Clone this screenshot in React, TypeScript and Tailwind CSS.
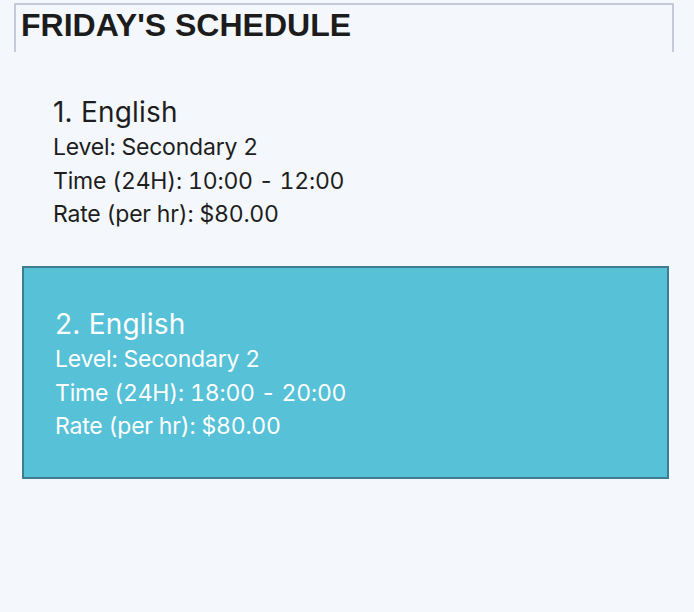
import React from "react";

type Lesson = { n: number; subject: string; level: string; time: string; rate: string };

const lessons: Lesson[] = [
  { n: 1, subject: "English", level: "Secondary 2", time: "10:00 - 12:00", rate: "$80.00" },
  { n: 2, subject: "English", level: "Secondary 2", time: "18:00 - 20:00", rate: "$80.00" },
];

function Card({ l, selected }: { l: Lesson; selected: boolean }) {
  return (
    <div
      className={
        selected
          ? "h-[213px] border-2 border-[#3e7d92] bg-[#56c1d7] text-white pl-[31px] pt-[39px]"
          : "h-[213px] border-2 border-transparent text-[#1e1e1e] pl-[29px] pt-[40px]"
      }
    >
      <div className="text-[28px] leading-[35px] tracking-[0.2px]">
        {l.n}. {l.subject}
      </div>
      <div className="text-[23px] leading-[34px] tracking-[-0.2px] tabular-nums">Level: {l.level}</div>
      <div className="text-[23px] leading-[34px] tracking-[-0.2px] tabular-nums">Time (24H): {l.time}</div>
      <div className="text-[23px] leading-[33px] tracking-[-0.2px] tabular-nums">Rate (per hr): {l.rate}</div>
    </div>
  );
}

export default function App() {
  return (
    <div className="w-[694px] h-[612px] bg-[#f4f8fc] overflow-hidden" style={{ fontFamily: "Inter, 'Noto Sans', sans-serif" }}>
      <div className="pt-[3px] pl-[14px] pr-[20px]">
        <div className="h-[49px] border-t-2 border-x-2 border-[#c6c9d8] pl-[5px]">
          <div
            className="text-[32px] font-bold leading-[40px] text-[#1c1c1c]"
            style={{ fontFamily: "'Liberation Sans', Arial, sans-serif" }}
          >
            FRIDAY'S SCHEDULE
          </div>
        </div>
      </div>
      <div className="pl-[22px] pr-[25px] pt-[1px]">
        {lessons.map((l, i) => (
          <Card key={l.n} l={l} selected={i === 1} />
        ))}
      </div>
    </div>
  );
}
